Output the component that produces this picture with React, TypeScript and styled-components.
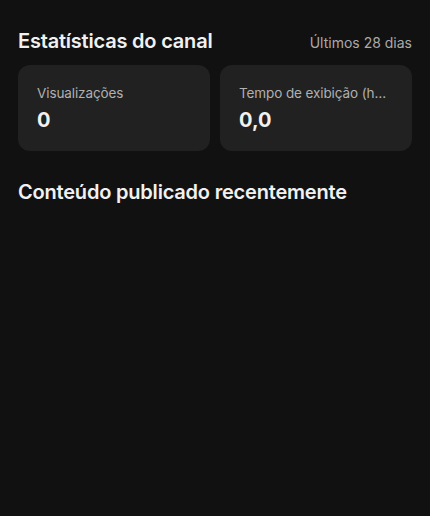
import React from "react";
import styled, { createGlobalStyle } from "styled-components";

const GlobalStyle = createGlobalStyle`
  html, body {
    margin: 0;
    padding: 0;
    background: #111111;
  }
  body {
    font-family: Inter, "Noto Sans", sans-serif;
    -webkit-font-smoothing: antialiased;
  }
`;

const Page = styled.div`
  min-height: 516px;
  background: #111111;
  color: #f1f1f1;
  padding: 29px 18px 0;
  box-sizing: border-box;
`;

const HeaderRow = styled.div`
  display: flex;
  align-items: baseline;
  justify-content: space-between;
`;

const SectionTitle = styled.h2<{ $top?: number }>`
  margin: ${(p) => p.$top ?? 0}px 0 0;
  font-size: 20px;
  font-weight: 600;
  letter-spacing: -0.2px;
  color: #f1f1f1;
`;

const Period = styled.span`
  font-size: 14px;
  color: #aaaaaa;
`;

const CardGrid = styled.div`
  display: grid;
  grid-template-columns: 1fr 1fr;
  gap: 10px;
  margin-top: 12px;
`;

const Card = styled.div`
  background: #212121;
  border-radius: 12px;
  height: 86px;
  padding: 20px 19px 0;
  box-sizing: border-box;
  min-width: 0;
`;

const CardLabel = styled.div`
  font-size: 13.5px;
  letter-spacing: -0.1px;
  color: #b0b0b0;
  white-space: nowrap;
  overflow: hidden;
  text-overflow: ellipsis;
`;

const CardValue = styled.div`
  margin-top: 7px;
  font-size: 20px;
  font-weight: 700;
  color: #f1f1f1;
`;

const stats = [
  { label: "Visualizações", value: "0" },
  { label: "Tempo de exibição (horas)", value: "0,0" },
];

const App: React.FC = () => {
  return (
    <>
      <GlobalStyle />
      <Page>
        <HeaderRow>
          <SectionTitle>Estatísticas do canal</SectionTitle>
          <Period>Últimos 28 dias</Period>
        </HeaderRow>
        <CardGrid>
          {stats.map((s) => (
            <Card key={s.label}>
              <CardLabel>{s.label}</CardLabel>
              <CardValue>{s.value}</CardValue>
            </Card>
          ))}
        </CardGrid>
        <SectionTitle $top={29}>Conteúdo publicado recentemente</SectionTitle>
      </Page>
    </>
  );
};

export default App;
